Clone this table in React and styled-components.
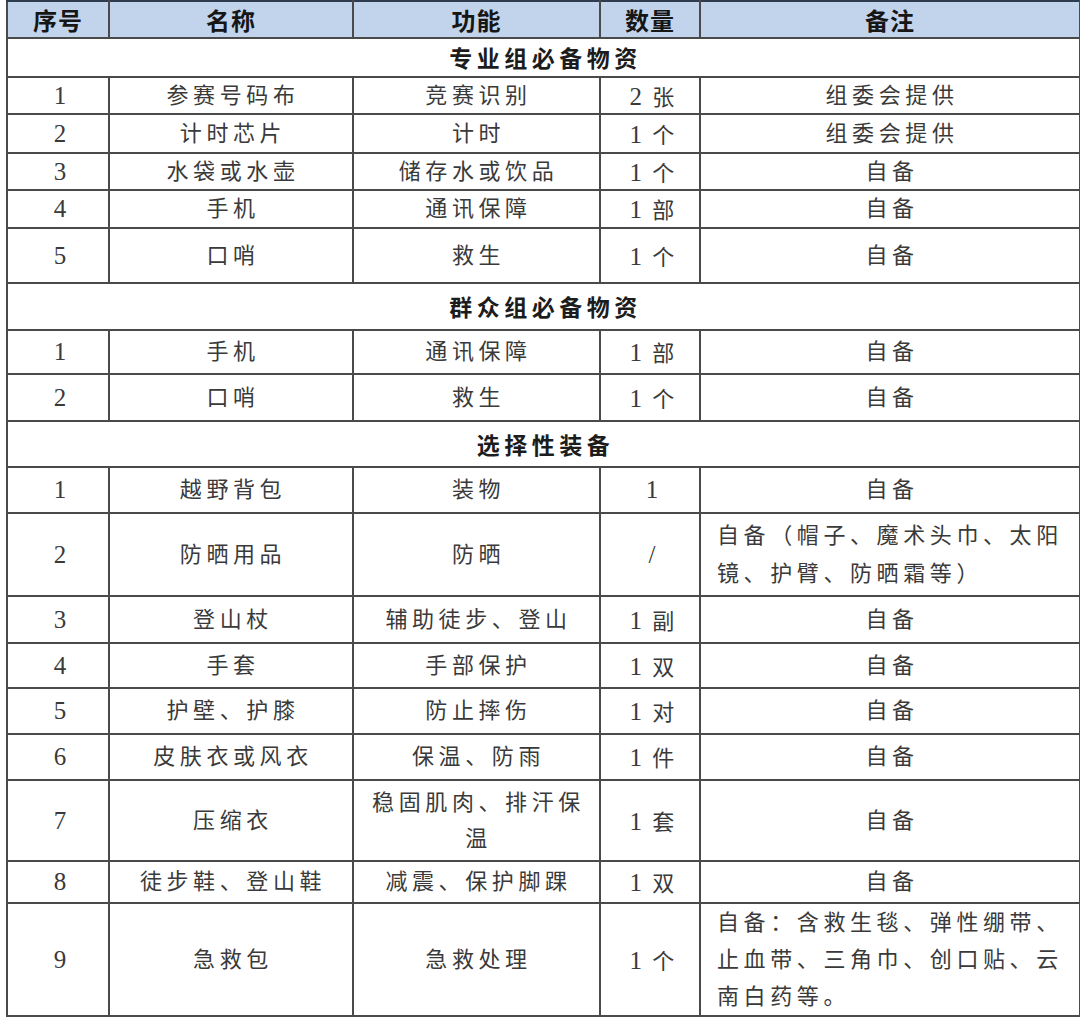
import React from "react";
import styled, { createGlobalStyle } from "styled-components";

const Global = createGlobalStyle`
  html, body { margin: 0; padding: 0; background: #ffffff; }
  body { font-family: "Liberation Serif", "Noto Sans CJK SC", serif; }
`;

const Page = styled.div`
  padding: 0 0 0 6px;
  width: 1080px;
  box-sizing: border-box;
`;

const Table = styled.table`
  width: 1073px;
  table-layout: fixed;
  border-collapse: collapse;
  border: 2px solid #4a4a4a;
`;

const HeadRow = styled.tr`
  height: 37px;
  background: #c2d4eb;
`;

const HeadCell = styled.th`
  border: 2px solid #4a4a4a;
  border-top-color: #2f3b4f;
  padding: 0;
  font-family: "Noto Sans CJK SC", sans-serif;
  font-weight: 700;
  font-size: 24px;
  letter-spacing: 1px;
  color: #161616;
  text-align: center;
  vertical-align: middle;
  line-height: 1;
`;

const Row = styled.tr`
  height: ${(p) => p.$h}px;
  background: #ffffff;
`;

const SectionCell = styled.td`
  border: 2px solid #4a4a4a;
  padding: 0 0 0 4px;
  font-family: "Noto Sans CJK SC", sans-serif;
  font-weight: 700;
  font-size: 23px;
  letter-spacing: 4.5px;
  color: #1c1c1c;
  text-align: center;
  vertical-align: middle;
  line-height: 1;
`;

const Cell = styled.td`
  border: 2px solid #4a4a4a;
  padding: ${(p) => (p.$left ? "0 6px 0 16px" : "0 0 0 4px")};
  font-family: "Liberation Serif", "Noto Sans CJK SC", serif;
  font-weight: 400;
  font-size: ${(p) => (p.$num ? "25px" : "22px")};
  letter-spacing: ${(p) => (p.$num ? "0px" : "4.6px")};
  color: #3a3a3a;
  text-align: ${(p) => (p.$left ? "left" : "center")};
  vertical-align: middle;
  line-height: ${(p) => (p.$lh ? `${p.$lh}px` : "26px")};
  white-space: nowrap;
`;

const Cjk = styled.span`
  font-family: "Noto Sans CJK SC", sans-serif;
  font-size: 22px;
  margin-left: 4px;
`;

const cols = [102, 244, 247, 100, 380];

const sections = [
  {
    title: "专业组必备物资",
    h: 39,
    rows: [
      { h: 37, c: ["1", "参赛号码布", "竞赛识别", ["2", "张"], "组委会提供"] },
      { h: 39, c: ["2", "计时芯片", "计时", ["1", "个"], "组委会提供"] },
      { h: 37, c: ["3", "水袋或水壶", "储存水或饮品", ["1", "个"], "自备"] },
      { h: 38, c: ["4", "手机", "通讯保障", ["1", "部"], "自备"] },
      { h: 55, c: ["5", "口哨", "救生", ["1", "个"], "自备"] },
    ],
  },
  {
    title: "群众组必备物资",
    h: 47,
    rows: [
      { h: 44, c: ["1", "手机", "通讯保障", ["1", "部"], "自备"] },
      { h: 47, c: ["2", "口哨", "救生", ["1", "个"], "自备"] },
    ],
  },
  {
    title: "选择性装备",
    h: 46,
    rows: [
      { h: 46, c: ["1", "越野背包", "装物", ["1", ""], "自备"] },
      {
        h: 83,
        lh: 38,
        c: ["2", "防晒用品", "防晒", ["/", ""], ["自备（帽子、魔术头巾、太阳", "镜、护臂、防晒霜等）"]],
      },
      { h: 47, c: ["3", "登山杖", "辅助徒步、登山", ["1", "副"], "自备"] },
      { h: 45, c: ["4", "手套", "手部保护", ["1", "双"], "自备"] },
      { h: 46, c: ["5", "护壁、护膝", "防止摔伤", ["1", "对"], "自备"] },
      { h: 46, c: ["6", "皮肤衣或风衣", "保温、防雨", ["1", "件"], "自备"] },
      { h: 81, lh: 36, c: ["7", "压缩衣", ["稳固肌肉、排汗保", "温"], ["1", "套"], "自备"] },
      { h: 42, c: ["8", "徒步鞋、登山鞋", "减震、保护脚踝", ["1", "双"], "自备"] },
      {
        h: 111,
        lh: 37,
        c: [
          "9",
          "急救包",
          "急救处理",
          ["1", "个"],
          ["自备：含救生毯、弹性绷带、", "止血带、三角巾、创口贴、云", "南白药等。"],
        ],
      },
    ],
  },
];

function Lines({ lines }) {
  return lines.map((l, i) => (
    <React.Fragment key={i}>
      {i > 0 && <br />}
      {l}
    </React.Fragment>
  ));
}

function Qty({ v }) {
  return (
    <Cell $num>
      {v[0]}
      {v[1] && (
        <>
          {" "}
          <Cjk>{v[1]}</Cjk>
        </>
      )}
    </Cell>
  );
}

function DataRow({ row }) {
  const [no, name, fn, qty, note] = row.c;
  const fnMulti = Array.isArray(fn);
  const noteMulti = Array.isArray(note);
  return (
    <Row $h={row.h}>
      <Cell $num>{no}</Cell>
      <Cell>{name}</Cell>
      <Cell $lh={fnMulti ? row.lh : undefined}>{fnMulti ? <Lines lines={fn} /> : fn}</Cell>
      <Qty v={qty} />
      <Cell $left={noteMulti} $lh={noteMulti ? row.lh : undefined}>
        {noteMulti ? <Lines lines={note} /> : note}
      </Cell>
    </Row>
  );
}

export default function App() {
  return (
    <Page>
      <Global />
      <Table>
        <colgroup>
          {cols.map((w, i) => (
            <col key={i} style={{ width: w }} />
          ))}
        </colgroup>
        <thead>
          <HeadRow>
            <HeadCell>序号</HeadCell>
            <HeadCell>名称</HeadCell>
            <HeadCell>功能</HeadCell>
            <HeadCell>数量</HeadCell>
            <HeadCell>备注</HeadCell>
          </HeadRow>
        </thead>
        <tbody>
          {sections.map((s) => (
            <React.Fragment key={s.title}>
              <Row $h={s.h}>
                <SectionCell colSpan={5}>{s.title}</SectionCell>
              </Row>
              {s.rows.map((r, i) => (
                <DataRow key={i} row={r} />
              ))}
            </React.Fragment>
          ))}
        </tbody>
      </Table>
    </Page>
  );
}
